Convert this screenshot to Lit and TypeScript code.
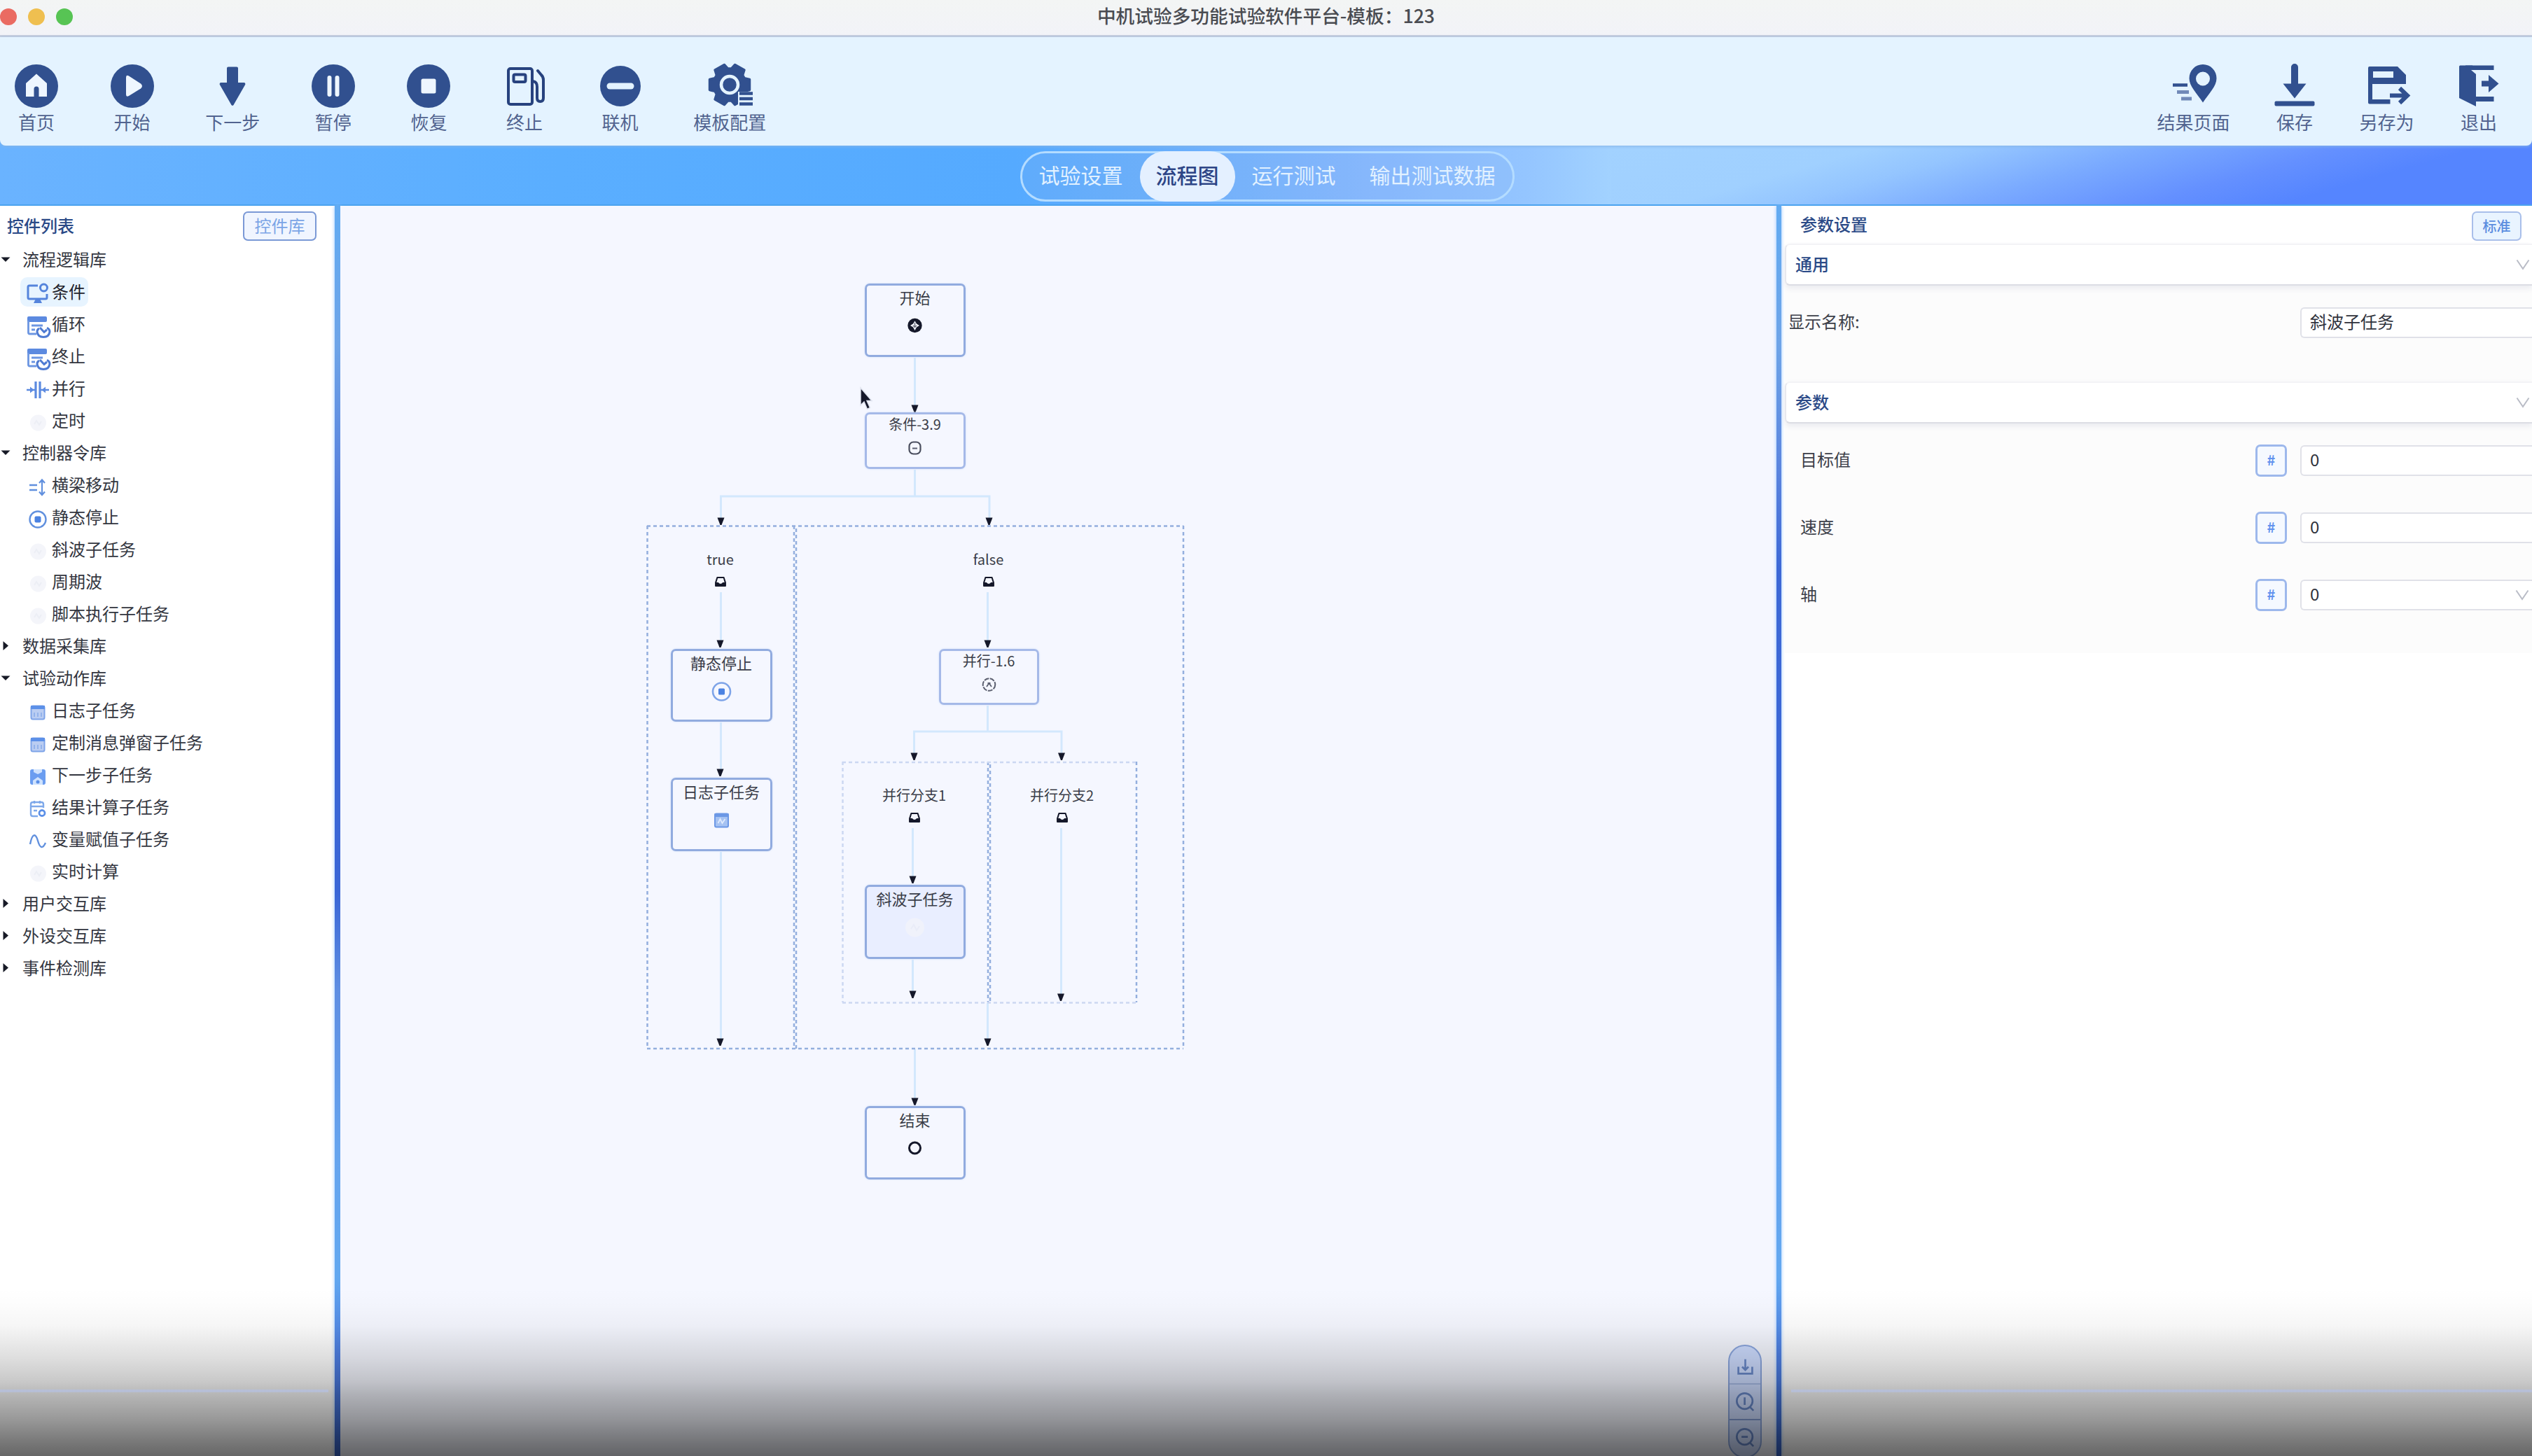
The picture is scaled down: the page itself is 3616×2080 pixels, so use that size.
import { LitElement, html, svg, css, nothing } from "lit";
import { customElement, property } from "lit/decorators.js";
import { styleMap } from "lit/directives/style-map.js";
import { classMap } from "lit/directives/class-map.js";

const NAVY = "#31508f";
const BLUE = "#6190de";
const INK = "#15182a";

const gearPath = (cx: number, cy: number, outer: number, inner: number): string => {
  const pts: string[] = [];
  for (let i = 0; i < 6; i++) {
    const base = i * 60;
    for (const [deg, r] of [[-24, inner], [-15, outer], [15, outer], [24, inner]]) {
      const a = ((base + deg) * Math.PI) / 180;
      pts.push(`${(cx + r * Math.cos(a)).toFixed(1)} ${(cy + r * Math.sin(a)).toFixed(1)}`);
    }
  }
  return `M${pts.join("L")}Z`;
};

const disc = (r = 31) => svg`<circle cx="33" cy="33" r=${r} fill=${NAVY}></circle>`;

const toolIcons: Record<string, unknown> = {
  home: svg`${disc()}<path d="M33 15.500L18 29V48H29.500V37a3.500 3.500 0 0 1 7 0V48H48V29Z" fill="#eef6ff"></path>`,
  play: svg`${disc()}<path d="M24 20.500q0-4 4-2L45 29.500q4 3.500 0 7L28 47q-4 2-4-2Z" fill="#eef6ff"></path>`,
  down: svg`<path d="M25 7.500a2 2 0 0 1 2-2H39a2 2 0 0 1 2 2V28H49.500a2 2 0 0 1 1.500 3.200L34.500 60a2 2 0 0 1-3 0L15 31.200A2 2 0 0 1 16.500 28H25Z" fill=${NAVY}></path>`,
  pause: svg`${disc()}<path d="M27.500 21V45M38.500 21V45" stroke="#eef6ff" stroke-width="6" stroke-linecap="round"></path>`,
  stop: svg`${disc()}<rect x="22.500" y="22.500" width="21" height="21" rx="2.500" fill="#eef6ff"></rect>`,
  fuel: svg`<g fill="none" stroke="#27427e" stroke-width="4" stroke-linejoin="round" stroke-linecap="round">
      <rect x="10" y="8" width="34" height="51" rx="3"></rect><rect x="17.500" y="16.500" width="17" height="10.500" rx="2"></rect>
      <path d="M44 26q7 0 7 8V50q0 5 4.500 5t4.500-5V24q0-4-3-7L52 11"></path></g>`,
  minus: svg`${disc(29)}<rect x="13.500" y="28.500" width="39" height="9" rx="4.500" fill="#e4f3ff"></rect>`,
  gear: svg`<path d=${gearPath(33, 31, 29.5, 23)} fill=${NAVY} stroke=${NAVY} stroke-width="3.500" stroke-linejoin="round"></path>
      <circle cx="33" cy="31" r="12" fill="none" stroke="#e4f3ff" stroke-width="4.500"></circle>
      <path d="M45 41H69V64H45Z" fill="#e4f3ff"></path>
      <path d="M47 43.500H66M47 51H66M47 58.500H66" stroke=${NAVY} stroke-width="4.500"></path>`,
  pin: svg`<path d="M47 2a19.500 19.500 0 0 0-19.500 20C27.500 33 38 43 47 56.500C56 43 66.500 33 66.500 22A19.500 19.500 0 0 0 47 2Zm0 10.500a10 10 0 1 1 0 20a10 10 0 0 1 0-20Z" fill=${NAVY}></path>
      <path d="M4 31.500H25" stroke=${NAVY} stroke-width="4.500"></path><path d="M10 41.500H27M16 51H31" stroke="#7189b8" stroke-width="5"></path>`,
  save: svg`<path d="M28 6a4 4 0 0 1 10 0V29.500H49.500L33 50.500L16.500 29.500H28Z" fill=${NAVY}></path><rect x="4.500" y="54.500" width="57" height="7" rx="2" fill=${NAVY}></rect>`,
  saveAs: svg`<path d="M7 7q0-2 2-2H49L61 17V30H13V52H38.500V58.500H9q-2 0-2-2ZM14 12V21H43V12Z" fill=${NAVY} fill-rule="evenodd"></path>
      <path d="M38 46.500H62M52 36L63 46.500L52 57" fill="none" stroke=${NAVY} stroke-width="6"></path>`,
  exit: svg`<path d="M5 5q0-1.500 1.500-1.500H24L29 16V62L5 50Z" fill=${NAVY}></path>
      <rect x="14" y="3.500" width="40.500" height="6.500" fill=${NAVY}></rect><path d="M22 10H28L29 16Z" fill="#e4f3ff"></path>
      <rect x="27" y="48" width="27.500" height="7" fill=${NAVY}></rect>
      <path d="M37 25.500H47V17L61.500 29.500L47 42V33.500H37Z" fill=${NAVY}></path>`,
};

const smallIcons: Record<string, unknown> = {
  monitor: svg`<g fill="none" stroke="#5584dc" stroke-width="3"><path d="M20 8H8q-2 0-2 2V25q0 2 2 2H31q2 0 2-2V20"></path>
      <circle cx="28.500" cy="11" r="5" stroke-width="3"></circle></g><path d="M17 27H23L26 33H14Z" fill="#5584dc"></path>`,
  loop: svg`<rect x="5" y="6" width="28" height="8" rx="2" fill="#5c8ae0"></rect>
      <path d="M6.500 12V29q0 2 2 2H18M11 19H27M11 25H16" fill="none" stroke="#6c96e2" stroke-width="2.800"></path>
      <path d="M22 23.500q-3 1-3 4.500q1 7.500 9 7.500t9-7.500q0-4-4-5.500" fill="none" stroke="#4f7bd2" stroke-width="3"></path><path d="M23 22L29 28.500L33 25" fill="none" stroke="#4f7bd2" stroke-width="3"></path>`,
  parallel: svg`<path d="M17 7V31M23 7V31" stroke="#5c8ae0" stroke-width="3.200"></path><path d="M4 19H16M24 19H36" stroke="#5c8ae0" stroke-width="2.500"></path>
      <path d="M9 14.500L14.500 19L9 23.500ZM31 14.500L25.500 19L31 23.500Z" fill="#5c8ae0"></path>`,
  ghost: svg`<circle cx="20.500" cy="20" r="11.500" fill="#f4f5fa"></circle><path d="M15 22L18 17L22 23L25 18" fill="none" stroke="#eceef5" stroke-width="2"></path>`,
  beam: svg`<path d="M8 17H19M8 24H19" stroke=${BLUE} stroke-width="2.600"></path><path d="M26 10V30M22 14L26 9.500L30 14M22 26.500L26 31L30 26.500" fill="none" stroke=${BLUE} stroke-width="2.200"></path>`,
  target: svg`<circle cx="20" cy="20" r="11.500" fill="none" stroke=${BLUE} stroke-width="2.400"></circle><rect x="15.500" y="15.500" width="9" height="9" rx="2" fill="#4b82e2"></rect>`,
  log: svg`<rect x="10.500" y="10.500" width="19" height="19" rx="2.500" fill="#bacdf2" stroke="#7ea4e8" stroke-width="2"></rect><rect x="10" y="10" width="20" height="5" fill="#5c90e8"></rect>
      <path d="M15 20V26M20 20V26M25 20V26" stroke="#8fb0ea" stroke-width="1.800"></path>`,
  next: svg`<rect x="9" y="9" width="22" height="22" rx="3" fill="#6b9df0"></rect><path d="M14 9V13L20 16L26 13V9ZM13 31V25L20 20L27 25V31Z" fill="#cfe2fd"></path><circle cx="20" cy="27" r="2.500" fill="#5c90e8"></circle>`,
  result: svg`<path d="M28 18V13q0-3-3-3H13q-3 0-3 3V27q0 3 3 3H20M10 16H28M15 8V12M23 8V12M14 22H19" fill="none" stroke="#7fa9ea" stroke-width="2.400"></path>
      <circle cx="26" cy="25.500" r="4" fill="none" stroke="#5c90e8" stroke-width="2.800"></circle>`,
  wave: svg`<path d="M9 24C12 8 17 8 20 19S27 31 31 22" fill="none" stroke=${BLUE} stroke-width="2.400"></path>`,
};

const nodeIcons: Record<string, unknown> = {
  start: svg`<circle cx="19.500" cy="19" r="10.200" fill=${INK}></circle><path d="M19.500 12.500L22 16.500L26 19L22 21.500L19.500 26L17 21.500L13 19L17 16.500Z" fill="#f5f7ff"></path><path d="M19.500 15V21M17 19L19.500 21.500L22 19" fill="none" stroke="#6b6e7c" stroke-width="1.500"></path>`,
  cond: svg`<rect x="11.500" y="11.500" width="16" height="17" rx="6" fill="none" stroke="#4a4e5e" stroke-width="2.200"></rect><path d="M16 20.500H23" stroke="#5b5f70" stroke-width="2"></path>`,
  par: svg`<circle cx="19.500" cy="20" r="8.800" fill="none" stroke="#5a5e6e" stroke-width="2" stroke-dasharray="7 1.500"></circle><path d="M16 23L19.500 18L23 23M17.500 18H21.500" fill="none" stroke="#5b5f70" stroke-width="1.800"></path>`,
  end: svg`<circle cx="19.500" cy="19" r="8" fill="none" stroke=${INK} stroke-width="3"></circle>`,
  tray: svg`<path d="M12.500 22L15 14H25L27.500 22V27H12.500Z" fill="none" stroke=${INK} stroke-width="2.200" stroke-linejoin="round"></path><path d="M12.500 21.500H16.500Q20 26 23.500 21.500H27.500V27.500H12.500Z" fill=${INK}></path>`,
  target: svg`<circle cx="19.500" cy="20" r="12.500" fill="none" stroke="#7ea4e8" stroke-width="2.600"></circle><rect x="15" y="15.500" width="9" height="9" rx="1.500" fill="#4b82e2"></rect>`,
  log: svg`<rect x="10" y="10.500" width="19" height="19" rx="2" fill="#a5c2f2" stroke="#6c98e6" stroke-width="2"></rect><rect x="9.500" y="10" width="20" height="5" fill="#6c98e6"></rect><path d="M14.500 24L17.500 18L20.500 24L24.500 18" fill="none" stroke="#dfeafd" stroke-width="1.800"></path>`,
  ghost: svg`<circle cx="19.500" cy="20" r="13.500" fill="#f0f2fb"></circle><path d="M14 22L18 16L22 24L26 18" fill="none" stroke="#e9ecf8" stroke-width="2"></path>`,
};

interface TreeRow { text: string; group?: "open" | "closed"; icon?: string; selected?: boolean; }

const tree: TreeRow[] = [
  { text: "流程逻辑库", group: "open" },
  { text: "条件", icon: "monitor", selected: true },
  { text: "循环", icon: "loop" },
  { text: "终止", icon: "loop" },
  { text: "并行", icon: "parallel" },
  { text: "定时", icon: "ghost" },
  { text: "控制器令库", group: "open" },
  { text: "横梁移动", icon: "beam" },
  { text: "静态停止", icon: "target" },
  { text: "斜波子任务", icon: "ghost" },
  { text: "周期波", icon: "ghost" },
  { text: "脚本执行子任务", icon: "ghost" },
  { text: "数据采集库", group: "closed" },
  { text: "试验动作库", group: "open" },
  { text: "日志子任务", icon: "log" },
  { text: "定制消息弹窗子任务", icon: "log" },
  { text: "下一步子任务", icon: "next" },
  { text: "结果计算子任务", icon: "result" },
  { text: "变量赋值子任务", icon: "wave" },
  { text: "实时计算", icon: "ghost" },
  { text: "用户交互库", group: "closed" },
  { text: "外设交互库", group: "closed" },
  { text: "事件检测库", group: "closed" },
];

interface FlowNode { x: number; y: number; w: number; h: number; text: string; icon: string; kind?: "small" | "bare" | "active"; }

const nodes: FlowNode[] = [
  { x: 1235, y: 405, w: 144, h: 105, text: "开始", icon: "start" },
  { x: 1235, y: 589, w: 144, h: 81, text: "条件-3.9", icon: "cond", kind: "small" },
  { x: 959, y: 782, w: 140, h: 70, text: "true", icon: "tray", kind: "bare" },
  { x: 1342, y: 782, w: 140, h: 70, text: "false", icon: "tray", kind: "bare" },
  { x: 958, y: 927, w: 145, h: 104, text: "静态停止", icon: "target" },
  { x: 958, y: 1111, w: 145, h: 105, text: "日志子任务", icon: "log" },
  { x: 1341, y: 927, w: 143, h: 80, text: "并行-1.6", icon: "par", kind: "small" },
  { x: 1236, y: 1119, w: 140, h: 70, text: "并行分支1", icon: "tray", kind: "bare" },
  { x: 1447, y: 1119, w: 140, h: 70, text: "并行分支2", icon: "tray", kind: "bare" },
  { x: 1235, y: 1264, w: 144, h: 106, text: "斜波子任务", icon: "ghost", kind: "active" },
  { x: 1235, y: 1580, w: 144, h: 105, text: "结束", icon: "end" },
];

const wires = [
  "M1306.500 511V585", "M1306.500 671V709", "M1029.500 745V709H1413V745",
  "M1029.500 846V923", "M1410.500 846V923", "M1029.500 1032V1107", "M1029.500 1217V1490",
  "M1410.500 1008V1045", "M1305.500 1082V1045H1516V1082", "M1303.500 1183V1258",
  "M1303.500 1371V1424", "M1515.500 1183V1427", "M1410.500 1433V1490", "M1306.500 1499V1575",
];

const arrowTips = [
  [1306.5, 589], [1029.5, 750], [1412.5, 750], [1028.5, 925], [1410.5, 925], [1028.5, 1109], [1305.5, 1086],
  [1516, 1086], [1303.5, 1262], [1303.5, 1426], [1515, 1430], [1028.5, 1494], [1410.5, 1494], [1306.5, 1579],
];

const ORIGIN_X = 486;
const ORIGIN_Y = 294;
const FONT = css`"Noto Sans CJK SC", "Noto Sans", sans-serif`;

@customElement("tool-button")
class ToolButton extends LitElement {
  @property() icon = "";
  @property() label = "";
  static styles = css`
    :host { display: flex; flex-direction: column; align-items: center; min-width: 64px; }
    .icon { width: 66px; height: 66px; margin: 0 -1px; overflow: visible; }
    .label { font-size: 26px; line-height: 38px; margin-top: -1px; color: #51638f; white-space: nowrap; }
  `;
  render() {
    return html`<svg class="icon" viewBox="0 0 66 66">${toolIcons[this.icon]}</svg><span class="label">${this.label}</span>`;
  }
}

@customElement("library-tree")
class LibraryTree extends LitElement {
  static styles = css`
    :host { display: flex; flex-direction: column; font-size: 24px; color: #33363f; }
    .row { display: flex; align-items: center; height: 46px; white-space: nowrap; line-height: 38px; }
    .row span { margin-top: -3px; }
    .caret { width: 14px; height: 14px; margin: 0 17px 0 1px; }
    .child { padding-left: 29px; }
    .item { display: flex; align-items: center; height: 42px; padding: 0 4px 0 5px; border-radius: 10px; }
    .selected { background: #e7f4ff; color: #1f222b; }
    .glyph { width: 40px; height: 40px; margin: 5px 0 0 0; overflow: visible; }
  `;
  render() {
    return tree.map((r) =>
      r.group
        ? html`<div class="row"><svg class="caret" viewBox="0 0 14 14"><path fill="#171a26"
              d=${r.group === "open" ? "M0.500 3.500H13.500L7 10Z" : "M3.500 0L11 6.500L3.500 13Z"}></path></svg><span>${r.text}</span></div>`
        : html`<div class="row child"><div class=${classMap({ item: true, selected: !!r.selected })}>
              <svg class="glyph" viewBox="0 0 40 40">${smallIcons[r.icon ?? ""]}</svg><span>${r.text}</span></div></div>`,
    );
  }
}

@customElement("flow-canvas")
class FlowCanvas extends LitElement {
  static styles = css`
    :host { display: block; position: relative; overflow: hidden; background: #f5f7ff; }
    .wires { display: block; width: 2051px; height: 1786px; }
    .node { position: absolute; box-sizing: border-box; display: flex; flex-direction: column; align-items: center;
      border: 3px solid #91abdf; border-radius: 7px; color: #3a3d48; font-size: 22px; line-height: 32px; white-space: nowrap;
      box-shadow: 0 0 3px #d4e1fa; }
    .node span { margin-left: -1px; }
    .icon { width: 40px; height: 40px; margin-top: 6px; }
    .small { font-size: 20px; line-height: 28px; border-color: #a5b9e8; }
    .small .icon { margin-top: 0; }
    .bare { border-color: transparent; box-shadow: none; font-size: 20px; line-height: 28px; }
    .bare .icon { margin-top: -1px; }
    .active { background: #e9eeff; }
    .tools { position: absolute; left: 1982px; top: 1627px; width: 48px; height: 162px; box-sizing: border-box;
      border: 2px solid #8ba6de; border-radius: 24px; background: #cddcff; overflow: hidden; display: flex; flex-direction: column; }
    .tool { height: 49px; border-bottom: 2px solid #829cd4; display: flex; align-items: center; justify-content: center; }
    .tool:first-child { height: 55px; padding-top: 5px; box-sizing: border-box; border-bottom-color: #a9bce8; }
    .tool:last-child { border-bottom: none; }
    .toolicon { width: 27px; height: 27px; fill: none; stroke: #6a8acb; stroke-width: 3; overflow: visible; }
    .cursor { position: absolute; left: 742px; top: 259px; width: 18px; height: 34px; overflow: visible; }
  `;
  render() {
    return html`
      <svg class="wires" viewBox="486 294 2051 1786">
        <g fill="none" stroke="#d3e8fd" stroke-width="3">${wires.map((d) => svg`<path d=${d}></path>`)}</g>
        <g fill="none" stroke="#94afde" stroke-width="2.500" stroke-dasharray="5 4">
          <path d="M924 751.500H1690"></path><path d="M924 1498H1690"></path><path d="M924.500 751V1498"></path><path d="M1690 751V1498"></path>
          <path d="M1134 751V1498"></path><path d="M1137 755V1498"></path>
          <path d="M1411 1088V1432"></path><path d="M1414 1092V1432"></path><path d="M1623 1088V1432"></path>
        </g>
        <g fill="none" stroke="#ccd8f2" stroke-width="2.500" stroke-dasharray="5 4">
          <path d="M1203 1089H1623"></path><path d="M1203.500 1088V1432"></path><path d="M1203 1432.500H1623"></path>
        </g>
        <g fill=${INK}>${arrowTips.map(([x, y]) => svg`<path d=${`M${x - 5} ${y - 10.5}H${x + 5}L${x + 1} ${y}H${x - 1}Z`}></path>`)}</g>
      </svg>
      ${nodes.map(
        (n) => html`<div class=${classMap({ node: true, [n.kind ?? "plain"]: true })}
          style=${styleMap({ left: `${n.x - ORIGIN_X}px`, top: `${n.y - ORIGIN_Y}px`, width: `${n.w}px`, height: `${n.h}px` })}>
          <span>${n.text}</span><svg class="icon" viewBox="0 0 40 40">${nodeIcons[n.icon]}</svg></div>`,
      )}
      <svg class="cursor" viewBox="0 0 18 34"><path d="M1 1V26L6 21L10.500 31.500L14.500 29.500L10 19.500H17Z" fill=${INK} stroke="#dfe3ee" stroke-width="1.500"></path></svg>
      <div class="tools">
        <div class="tool"><svg class="toolicon" viewBox="0 0 30 30"><path d="M4 15V26H26V15M15 3V18M10 15L15 20L20 15"></path></svg></div>
        <div class="tool"><svg class="toolicon" viewBox="0 0 30 30"><circle cx="14" cy="14" r="12.500"></circle><path d="M14 8V20M23 24L28 29"></path></svg></div>
        <div class="tool"><svg class="toolicon" viewBox="0 0 30 30"><circle cx="14" cy="14" r="12.500"></circle><path d="M9 14H19M23 24L28 29"></path></svg></div>
      </div>
    `;
  }
}

@customElement("param-panel")
class ParamPanel extends LitElement {
  static styles = css`
    :host { display: flex; flex-direction: column; background: #fff; overflow: hidden; font-size: 24px; color: #3c3f49; }
    .title { display: flex; justify-content: space-between; align-items: center; height: 54px; padding: 3px 15px 0 27px; box-sizing: border-box;
      color: #2b4a87; font-weight: 500; line-height: 38px; white-space: nowrap; }
    .caption { margin-top: -5px; }
    .badge { box-sizing: border-box; width: 71px; height: 42px; border: 2px solid #a9bfea; border-radius: 7px; background: #e9f4ff; color: #5b8ddf;
      font-size: 20px; line-height: 37px; text-align: center; }
    .head { display: flex; align-items: center; justify-content: space-between; height: 60px; box-sizing: border-box; margin-left: 5px; padding: 0 3px 0 13px;
      background: #fff; border: 2px solid #e7e8ee; border-top-color: #f3f3f6; border-bottom-color: #dcdde4; border-right: none; border-radius: 7px 0 0 7px;
      color: #2b4a87; font-weight: 500; line-height: 38px; box-shadow: 0 4px 8px #e9eaef; position: relative; }
    .head span { margin-top: -3px; }
    .chev { width: 20px; height: 16px; fill: none; stroke: #b9bcc6; stroke-width: 2; flex: none; }
    .body { background: #fcfcfc; margin-left: 5px; box-sizing: border-box; display: flex; flex-direction: column; }
    .general { height: 137px; padding-top: 30px; }
    .params { height: 328px; padding-top: 30px; gap: 51px; }
    .field { display: flex; align-items: center; height: 45px; }
    .name { flex: 1; padding-left: 22px; line-height: 41px; margin-top: -4px; white-space: nowrap; }
    .clipped { padding-left: 0; margin-left: 7px; text-indent: -3px; overflow: hidden; }
    .hash { box-sizing: border-box; width: 45px; height: 46px; margin-right: 19px; border: 3px solid #9db8ec; border-radius: 7px; background: #f5f9ff;
      color: #6292ee; font-size: 20px; font-weight: 700; line-height: 38px; text-align: center; }
    .input { box-sizing: border-box; width: 331px; height: 44px; display: flex; align-items: center; justify-content: space-between; padding: 0 4px 0 12px;
      border: 2px solid #e0e1e8; border-right: none; border-radius: 6px 0 0 6px; background: #fff; color: #2f323c; line-height: 36px; }
    .input span { margin-top: -4px; }
  `;
  private chevron() {
    return html`<svg class="chev" viewBox="0 0 20 16"><path d="M1.500 1.500L10 14L18.500 1.500"></path></svg>`;
  }
  private field(name: string, select = false) {
    return html`<div class="field"><span class="name">${name}</span><span class="hash">#</span>
      <div class="input"><span>0</span>${select ? this.chevron() : nothing}</div></div>`;
  }
  render() {
    return html`
      <div class="title"><span class="caption">参数设置</span><span class="badge">标准</span></div>
      <div class="head"><span>通用</span>${this.chevron()}</div>
      <div class="body general">
        <div class="field"><span class="name clipped">显示名称:</span><div class="input"><span>斜波子任务</span></div></div>
      </div>
      <div class="head"><span>参数</span>${this.chevron()}</div>
      <div class="body params">${this.field("目标值")}${this.field("速度")}${this.field("轴", true)}</div>
    `;
  }
}

@customElement("app-root")
class AppRoot extends LitElement {
  static styles = css`
    :host { display: flex; flex-direction: column; position: relative; width: 100vw; height: 100vh; overflow: hidden; background: #fff;
      font-family: ${FONT}; }
    .titlebar { display: grid; grid-template-columns: 1fr auto 1fr; align-items: center; height: 53px; box-sizing: border-box; padding-bottom: 3px;
      background: linear-gradient(#f3f5f4, #f2f3f8); border-bottom: 3px solid #c8cedd; }
    .lights { display: flex; gap: 16px; }
    .light { width: 24px; height: 24px; border-radius: 50%; }
    .red { background: #ea6b62; }
    .yellow { background: #efbf50; }
    .green { background: #57c454; }
    .apptitle { font-size: 26.700px; font-weight: 500; line-height: 40px; margin-top: -4px; color: #4a4c52; white-space: nowrap; }
    .toolbar { display: flex; justify-content: space-between; height: 155px; box-sizing: border-box; padding: 37px 44px 0 20px; background: #e4f3ff;
      border-radius: 0 0 8px 8px; box-shadow: 0 1px 4px #86b4e6; position: relative; }
    .group { display: flex; gap: 72.600px; }
    .right { gap: 60.500px; }
    .band { display: flex; align-items: flex-start; justify-content: center; height: 93px; margin-top: -7px; box-sizing: border-box; padding: 15px 0 0 3px;
      border-bottom: 2px solid #4ba3ef;
      background:
        linear-gradient(164deg, #a2d2ff 0%, #a0d0ff 25%, #94c5ff 35%, #7aaaff 50%, #6490ff 66%, #5585ff 78%, #5585ff 100%) right / 1316px 100% no-repeat,
        linear-gradient(90deg, #6ab3ff 0, #5aaeff 800px, #55aaff 1450px, #66aefc 1650px, #86b8ff 1950px, #94c5ff 2180px, #a2d2ff 2300px); }
    .tabs { display: flex; box-sizing: border-box; height: 72px; border: 3px solid #b4dcff; border-radius: 36px; background: #86b2ee33; }
    .tab { font-size: 30px; line-height: 61px; padding: 0 24px; border-radius: 36px; color: #e2f1ff; white-space: nowrap; }
    .on { background: #e4f0ff; color: #2d4586; margin: -3px 0; line-height: 67px; padding: 0 23px; font-weight: 500; }
    .main { display: flex; flex: 1; min-height: 0; }
    .library { width: 478px; flex: none; background: #fff; }
    .libhead { display: flex; justify-content: space-between; align-items: center; height: 54px; padding: 4px 26px 0 10px; box-sizing: border-box;
      font-size: 24px; font-weight: 500; line-height: 36px; color: #2b4a87; }
    .caption { margin-top: -3px; }
    .libbtn { box-sizing: border-box; width: 105px; height: 42px; border: 2px solid #7b99d6; border-radius: 7px; background: #f0f5ff; color: #7ba5e6;
      font-weight: 400; line-height: 36px; text-align: center; }
    .divider { width: 8px; flex: none; box-shadow: 0 0 5px #8fc2ff; position: relative;
      background: linear-gradient(#62abf2 0, #6ea4e8 200px, #5a84de 380px, #3d68d6 520px, #3a66d6 980px, #5f8ee2 1120px, #66a4ee 1350px, #62a8f0 1530px, #4f80e4 1640px, #3a66cc 1786px); }
    .slim { width: 7px; }
    .canvas { flex: 1; }
    .params { width: 1072px; flex: none; }
    .shade { position: absolute; left: 0; right: 0; bottom: 0; height: 240px; pointer-events: none;
      background: linear-gradient(#0000 0, #00000003 25px, #00000009 53px, #00000010 67px, #00000021 100px, #00000036 133px, #0000004a 153px, #00000066 187px, #00000087 220px, #00000099 240px); }
    .glint { position: absolute; height: 4px; top: 1985px; background: #b4c2e8; opacity: 0.6; }
    .gleft { left: 0; width: 469px; }
    .gright { left: 2558px; right: 0; }
  `;
  render() {
    const left = [["home", "首页"], ["play", "开始"], ["down", "下一步"], ["pause", "暂停"], ["stop", "恢复"], ["fuel", "终止"], ["minus", "联机"], ["gear", "模板配置"]];
    const right = [["pin", "结果页面"], ["save", "保存"], ["saveAs", "另存为"], ["exit", "退出"]];
    const button = ([icon, label]: string[]) => html`<tool-button icon=${icon} label=${label}></tool-button>`;
    return html`
      <header class="titlebar">
        <div class="lights"><i class="light red"></i><i class="light yellow"></i><i class="light green"></i></div>
        <div class="apptitle">中机试验多功能试验软件平台-模板：123</div>
      </header>
      <div class="toolbar">
        <div class="group">${left.map(button)}</div>
        <div class="group right">${right.map(button)}</div>
      </div>
      <nav class="band">
        <div class="tabs">
          <span class="tab">试验设置</span><span class="tab on">流程图</span><span class="tab">运行测试</span><span class="tab">输出测试数据</span>
        </div>
      </nav>
      <main class="main">
        <aside class="library">
          <div class="libhead"><span class="caption">控件列表</span><span class="libbtn">控件库</span></div>
          <library-tree></library-tree>
        </aside>
        <div class="divider"></div>
        <flow-canvas class="canvas"></flow-canvas>
        <div class="divider slim"></div>
        <param-panel class="params"></param-panel>
      </main>
      <div class="shade"></div>
      <div class="glint gleft"></div>
      <div class="glint gright"></div>
    `;
  }
}
